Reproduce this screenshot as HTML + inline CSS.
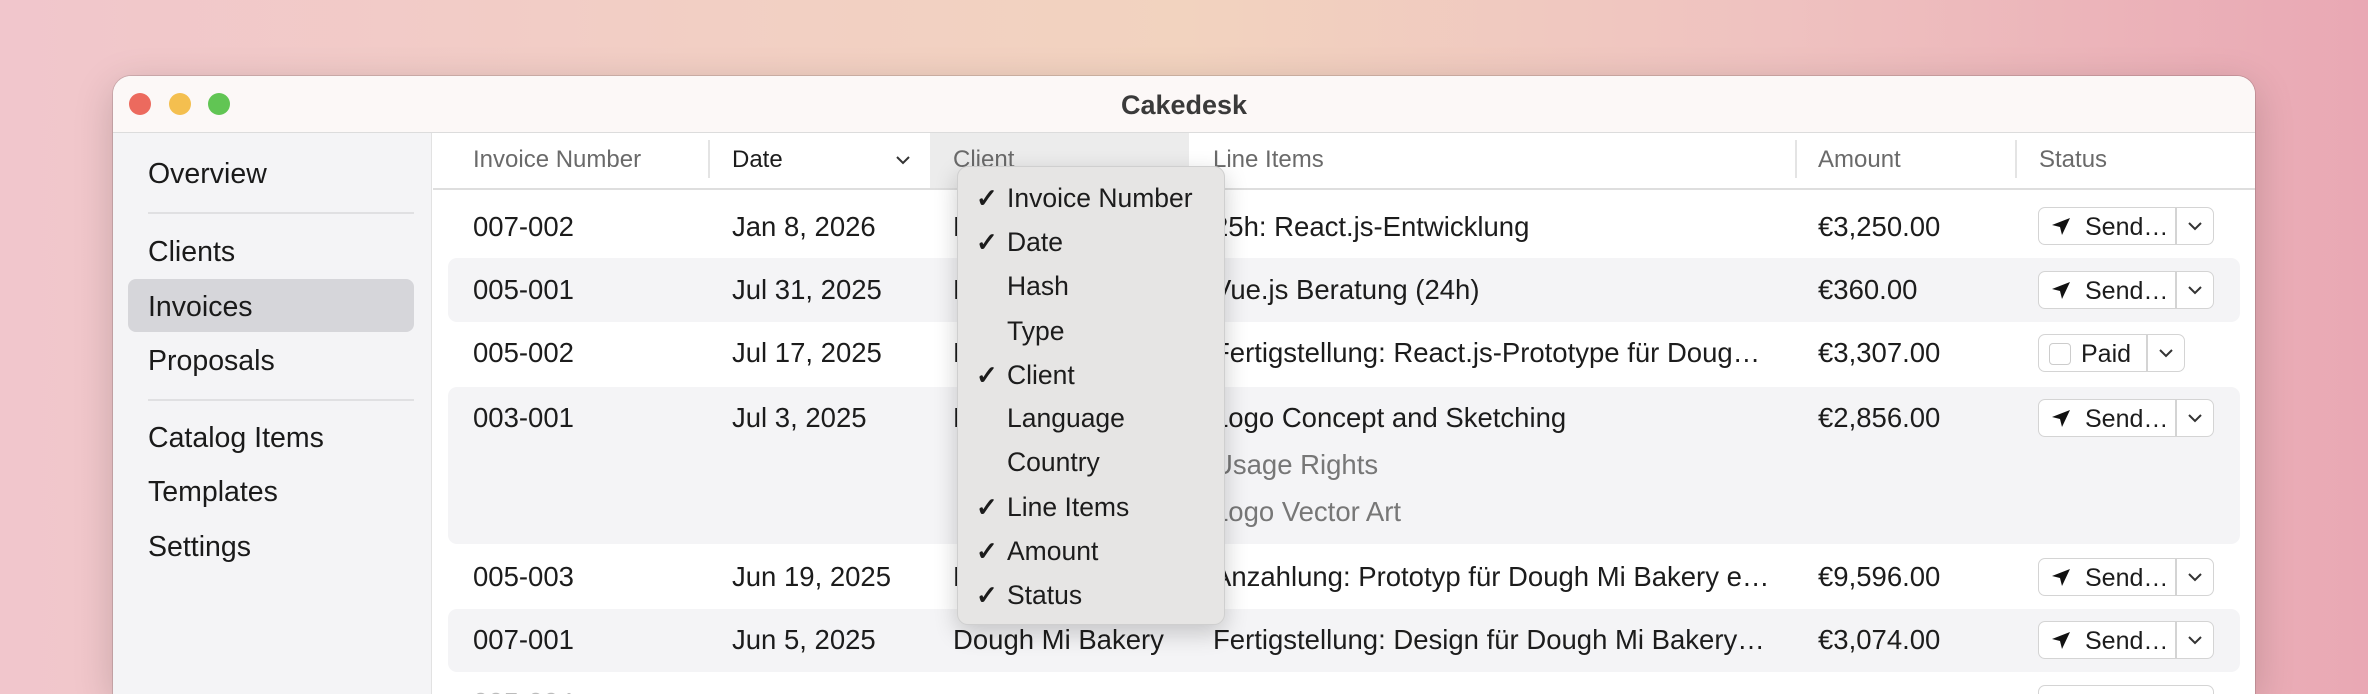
<!DOCTYPE html>
<html><head><meta charset="utf-8"><style>
*{margin:0;padding:0;box-sizing:border-box}
html{width:2368px;height:694px;overflow:hidden}
body{width:2368px;height:694px;overflow:hidden;position:relative;font-family:"Liberation Sans",sans-serif;
background:linear-gradient(90deg,#f1c6cc 0%,#f2cfc4 30%,#f2d3bf 50%,#efc2c0 75%,#e9a8b4 100%);}
.win{position:absolute;left:113px;top:76px;width:2142px;height:618px;border-radius:18px 18px 0 0;background:#fff;overflow:hidden;box-shadow:0 10px 40px rgba(0,0,0,.18),0 0 0 1px rgba(0,0,0,.12)}
.tb{position:absolute;left:0;top:0;right:0;height:57px;background:#fcf8f7;border-bottom:1px solid #dcdcdc}
.tl{position:absolute;top:17px;width:22px;height:22px;border-radius:50%}
.title{position:absolute;left:0;right:0;top:14px;text-align:center;font-weight:bold;font-size:27px;color:#3a3a3a}
.sb{position:absolute;left:0;top:57px;width:319px;bottom:0;background:#f4f4f6;border-right:1px solid #e2e2e2}
.si{position:absolute;left:35px;font-size:28.5px;color:#1a1a1a;line-height:30px}
.sel{position:absolute;left:15px;top:146px;width:286px;height:53px;background:#d6d6da;border-radius:8px}
.div{position:absolute;left:35px;width:266px;height:2px;background:#e0e0e2}
.t{position:absolute;font-size:27.5px;color:#1c1c1c;white-space:nowrap;line-height:30px}
.h{position:absolute;font-size:24px;color:#6a6a6a;top:70px;line-height:28px}
.vs{position:absolute;top:64px;width:2px;height:38px;background:#e4e4e4}
.stripe{position:absolute;left:335px;width:1792px;background:#f4f4f6;border-radius:9px}
.btn{position:absolute;left:1925px;width:176px;height:38px;border:1.5px solid #d4d4d4;border-radius:7px;background:#fff;font-size:25px;color:#1c1c1c}
.btn .d{position:absolute;left:136px;top:0;width:1.5px;height:100%;background:#d4d4d4}
.btn .lbl{position:absolute;left:46px;top:5px}
.btn svg.ar{position:absolute;left:12px;top:9px}
.btn svg.ch{position:absolute;right:10px;top:13px}
.menu{position:absolute;left:957px;top:166px;width:268px;height:459px;background:#e6e5e4;border-radius:11px;border:1px solid #cfcfcf;box-shadow:0 8px 24px rgba(0,0,0,.2)}
.mi{position:absolute;left:49px;font-size:26.5px;color:#1c1c1c;line-height:30px;white-space:nowrap}
.ck{position:absolute;left:18px;font-size:26px;font-weight:bold;color:#1c1c1c;line-height:30px}
</style></head><body>
<div class="win">
<div class="tb">
<div class="tl" style="left:16px;background:#ec6a5e"></div>
<div class="tl" style="left:56px;background:#f4bf4f"></div>
<div class="tl" style="left:95px;background:#61c554"></div>
<div class="title">Cakedesk</div>
</div>
<div class="sb">
<div class="sel"></div>
<div class="si" style="top:26px">Overview</div>
<div class="div" style="top:79px"></div>
<div class="si" style="top:104px">Clients</div>
<div class="si" style="top:159px">Invoices</div>
<div class="si" style="top:213px">Proposals</div>
<div class="div" style="top:266px"></div>
<div class="si" style="top:290px">Catalog Items</div>
<div class="si" style="top:344px">Templates</div>
<div class="si" style="top:399px">Settings</div>
</div>
<div style="position:absolute;left:817px;top:57px;width:259px;height:56px;background:#ececec"></div>
<div style="position:absolute;left:320px;top:112px;right:0;height:2px;background:#dedede"></div>
<div class="h" style="left:360px">Invoice Number</div>
<div class="vs" style="left:595px"></div>
<div class="h" style="left:619px;color:#1c1c1c">Date</div>
<svg style="position:absolute;left:782px;top:78px" width="16" height="12" viewBox="0 0 16 12"><path d="M2 3l6 6 6-6" fill="none" stroke="#333" stroke-width="2"/></svg>
<div class="h" style="left:840px">Client</div>
<div class="h" style="left:1100px">Line Items</div>
<div class="vs" style="left:1682px"></div>
<div class="h" style="left:1705px">Amount</div>
<div class="vs" style="left:1902px"></div>
<div class="h" style="left:1926px">Status</div>
<div class="stripe" style="top:182px;height:64px"></div>
<div class="stripe" style="top:311px;height:157px"></div>
<div class="stripe" style="top:533px;height:63px"></div>
<div class="t" style="left:360px;top:136px">007-002</div><div class="t" style="left:619px;top:136px">Jan 8, 2026</div><div class="t" style="left:840px;top:136px">N</div><div class="t" style="left:1100px;top:136px">25h: React.js-Entwicklung</div><div class="t" style="left:1705px;top:136px">€3,250.00</div>
<div class="t" style="left:360px;top:199px">005-001</div><div class="t" style="left:619px;top:199px">Jul 31, 2025</div><div class="t" style="left:840px;top:199px">D</div><div class="t" style="left:1100px;top:199px">Vue.js Beratung (24h)</div><div class="t" style="left:1705px;top:199px">€360.00</div>
<div class="t" style="left:360px;top:262px">005-002</div><div class="t" style="left:619px;top:262px">Jul 17, 2025</div><div class="t" style="left:840px;top:262px">D</div><div class="t" style="left:1100px;top:262px">Fertigstellung: React.js-Prototype für Doug…</div><div class="t" style="left:1705px;top:262px">€3,307.00</div>
<div class="t" style="left:360px;top:327px">003-001</div><div class="t" style="left:619px;top:327px">Jul 3, 2025</div><div class="t" style="left:840px;top:327px">E</div><div class="t" style="left:1100px;top:327px">Logo Concept and Sketching</div><div class="t" style="left:1705px;top:327px">€2,856.00</div>
<div class="t" style="left:1100px;top:374px;color:#777">Usage Rights</div>
<div class="t" style="left:1100px;top:421px;color:#777">Logo Vector Art</div>
<div class="t" style="left:360px;top:486px">005-003</div><div class="t" style="left:619px;top:486px">Jun 19, 2025</div><div class="t" style="left:840px;top:486px">D</div><div class="t" style="left:1100px;top:486px">Anzahlung: Prototyp für Dough Mi Bakery e…</div><div class="t" style="left:1705px;top:486px">€9,596.00</div>
<div class="t" style="left:360px;top:549px">007-001</div><div class="t" style="left:619px;top:549px">Jun 5, 2025</div><div class="t" style="left:840px;top:549px">Dough Mi Bakery</div><div class="t" style="left:1100px;top:549px">Fertigstellung: Design für Dough Mi Bakery…</div><div class="t" style="left:1705px;top:549px">€3,074.00</div>
<div class="t" style="left:360px;top:612px;color:#bbb">005-004</div>
<div class="btn" style="top:131px"><svg class="ar" width="20" height="20" viewBox="0 0 20 20"><path d="M19 1L1 8l8 2 2 8z" fill="#111"/></svg><span class="lbl">Send…</span><div class="d"></div><svg class="ch" width="16" height="11" viewBox="0 0 16 11"><path d="M2 2l6 6 6-6" fill="none" stroke="#333" stroke-width="2"/></svg></div>
<div class="btn" style="top:195px"><svg class="ar" width="20" height="20" viewBox="0 0 20 20"><path d="M19 1L1 8l8 2 2 8z" fill="#111"/></svg><span class="lbl">Send…</span><div class="d"></div><svg class="ch" width="16" height="11" viewBox="0 0 16 11"><path d="M2 2l6 6 6-6" fill="none" stroke="#333" stroke-width="2"/></svg></div>
<div class="btn" style="top:258px;width:147px"><div style="position:absolute;left:10px;top:8px;width:22px;height:22px;border:1.5px solid #ccc;border-radius:4px"></div><span class="lbl" style="left:42px">Paid</span><div class="d" style="left:107px"></div><svg class="ch" width="16" height="11" viewBox="0 0 16 11"><path d="M2 2l6 6 6-6" fill="none" stroke="#333" stroke-width="2"/></svg></div>
<div class="btn" style="top:323px"><svg class="ar" width="20" height="20" viewBox="0 0 20 20"><path d="M19 1L1 8l8 2 2 8z" fill="#111"/></svg><span class="lbl">Send…</span><div class="d"></div><svg class="ch" width="16" height="11" viewBox="0 0 16 11"><path d="M2 2l6 6 6-6" fill="none" stroke="#333" stroke-width="2"/></svg></div>
<div class="btn" style="top:482px"><svg class="ar" width="20" height="20" viewBox="0 0 20 20"><path d="M19 1L1 8l8 2 2 8z" fill="#111"/></svg><span class="lbl">Send…</span><div class="d"></div><svg class="ch" width="16" height="11" viewBox="0 0 16 11"><path d="M2 2l6 6 6-6" fill="none" stroke="#333" stroke-width="2"/></svg></div>
<div class="btn" style="top:545px"><svg class="ar" width="20" height="20" viewBox="0 0 20 20"><path d="M19 1L1 8l8 2 2 8z" fill="#111"/></svg><span class="lbl">Send…</span><div class="d"></div><svg class="ch" width="16" height="11" viewBox="0 0 16 11"><path d="M2 2l6 6 6-6" fill="none" stroke="#333" stroke-width="2"/></svg></div>
<div class="btn" style="top:609px"></div>
</div>
<div class="menu">
<div class="ck" style="top:16px">✓</div><div class="mi" style="top:16px">Invoice Number</div>
<div class="ck" style="top:60px">✓</div><div class="mi" style="top:60px">Date</div>
<div class="mi" style="top:104px">Hash</div>
<div class="mi" style="top:149px">Type</div>
<div class="ck" style="top:193px">✓</div><div class="mi" style="top:193px">Client</div>
<div class="mi" style="top:236px">Language</div>
<div class="mi" style="top:280px">Country</div>
<div class="ck" style="top:325px">✓</div><div class="mi" style="top:325px">Line Items</div>
<div class="ck" style="top:369px">✓</div><div class="mi" style="top:369px">Amount</div>
<div class="ck" style="top:413px">✓</div><div class="mi" style="top:413px">Status</div>
</div>
</body></html>
